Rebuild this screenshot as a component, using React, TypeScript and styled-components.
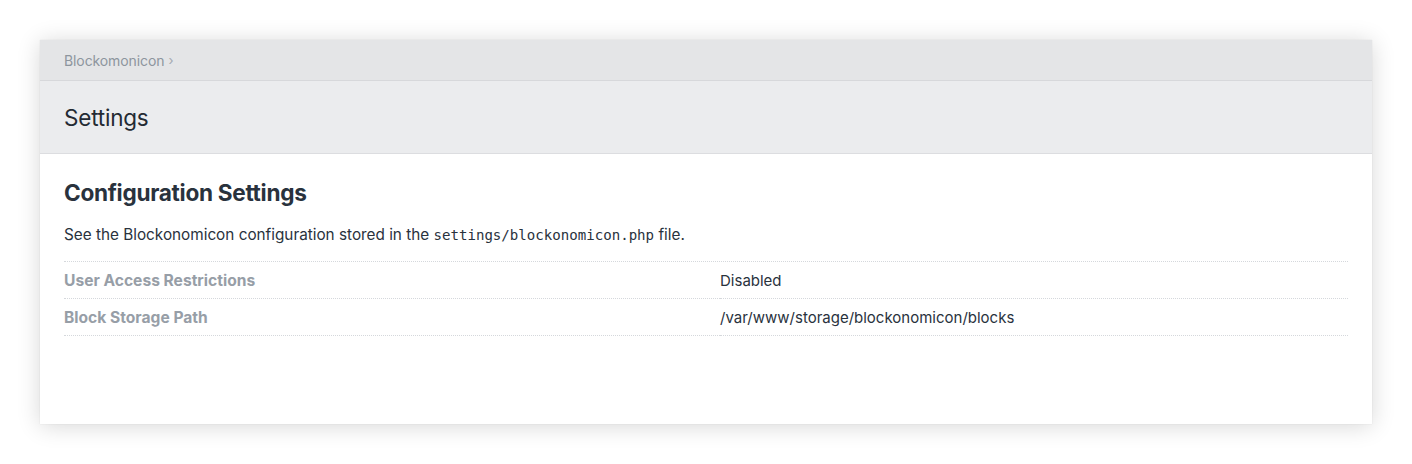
import React from "react";
import styled, { createGlobalStyle } from "styled-components";

const Global = createGlobalStyle`
  html, body { margin: 0; padding: 0; background: #ffffff; }
  body { font-family: Inter, "Liberation Sans", sans-serif; -webkit-font-smoothing: antialiased; }
  * { box-sizing: border-box; }
`;

const Page = styled.div`
  padding: 40px 40px 40px 40px;
`;

const Card = styled.div`
  background: #ffffff;
  height: 384px;
  box-shadow: 0 0 1px rgba(0, 0, 0, 0.12), 0 2px 22px rgba(0, 0, 0, 0.16);
  display: flex;
  flex-direction: column;
`;

const Breadcrumb = styled.div`
  height: 41px;
  background: #e4e5e7;
  border-bottom: 1px solid #d7d8db;
  padding: 0 24px;
  display: flex;
  align-items: center;
  font-size: 14px;
  color: #8d959e;
  gap: 4px;
  letter-spacing: -0.1px;
`;

const Chevron = styled.span`
  font-size: 13px;
  color: #a3a9b0;
`;

const TitleBar = styled.div`
  height: 73px;
  background: #ebecee;
  border-bottom: 1px solid #dcdde0;
  padding: 0 24px;
  display: flex;
  align-items: center;
`;

const Title = styled.h1`
  margin: 0;
  font-size: 22.5px;
  font-weight: 400;
  color: #232a33;
  letter-spacing: -0.2px;
`;

const Body = styled.div`
  padding: 24px 24px 0 24px;
`;

const Heading = styled.h2`
  margin: 0;
  font-size: 22.6px;
  font-weight: 700;
  color: #29323d;
  letter-spacing: -0.3px;
  line-height: 30px;
`;

const Intro = styled.p`
  margin: 16px 0 15px 0;
  font-size: 15.3px;
  line-height: 22px;
  color: #29323d;
`;

const Code = styled.code`
  font-family: "DejaVu Sans Mono", "Liberation Mono", monospace;
  font-size: 14.1px;
  color: #29323d;
`;

const Table = styled.div`
  display: grid;
  grid-template-columns: 656px 1fr;
  border-top: 1px dotted #d5d8dc;
`;

const Label = styled.div`
  height: 37px;
  display: flex;
  align-items: center;
  font-size: 15.6px;
  font-weight: 700;
  color: #979ea7;
  border-bottom: 1px dotted #d5d8dc;
`;

const Value = styled.div`
  height: 37px;
  display: flex;
  align-items: center;
  font-size: 15px;
  color: #29323d;
  border-bottom: 1px dotted #d5d8dc;
`;

const rows = [
  { label: "User Access Restrictions", value: "Disabled" },
  { label: "Block Storage Path", value: "/var/www/storage/blockonomicon/blocks" },
];

export default function App() {
  return (
    <>
      <Global />
      <Page>
        <Card>
          <Breadcrumb>
            <span>Blockomonicon</span>
            <Chevron>›</Chevron>
          </Breadcrumb>
          <TitleBar>
            <Title>Settings</Title>
          </TitleBar>
          <Body>
            <Heading>Configuration Settings</Heading>
            <Intro>
              See the Blockonomicon configuration stored in the <Code>settings/blockonomicon.php</Code> file.
            </Intro>
            <Table>
              {rows.map((r) => (
                <React.Fragment key={r.label}>
                  <Label>{r.label}</Label>
                  <Value>{r.value}</Value>
                </React.Fragment>
              ))}
            </Table>
          </Body>
        </Card>
      </Page>
    </>
  );
}
